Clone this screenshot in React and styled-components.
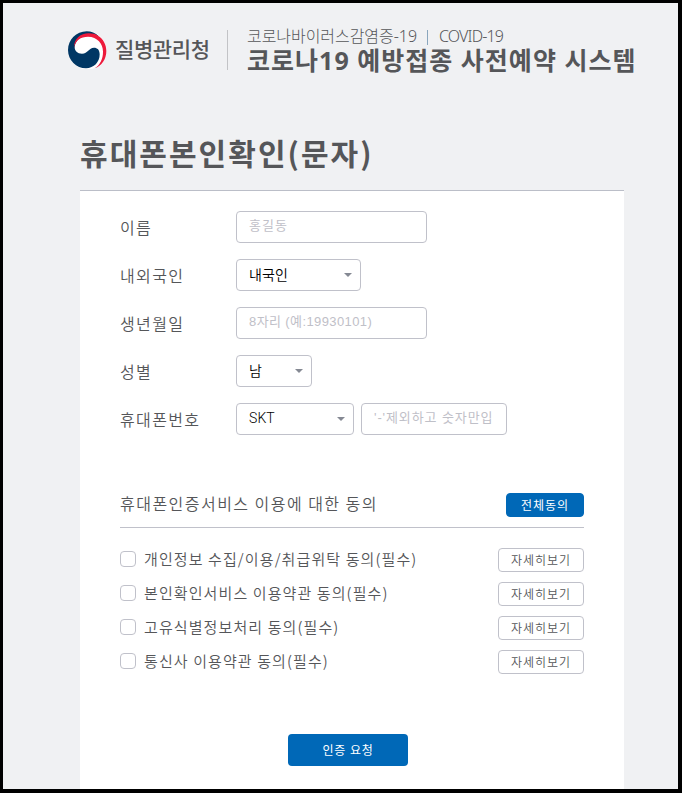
import React, { useState } from "react";
import styled, { createGlobalStyle } from "styled-components";

const GlobalStyle = createGlobalStyle`
	* {
		box-sizing: border-box;
	}
	body {
		margin: 0;
		color: #555659;
		font-family: "Noto Sans CJK KR", sans-serif;
	}
	h1, h2, p {
		margin: 0;
	}
	button, input {
		font-family: "Liberation Sans", "Noto Sans CJK KR", sans-serif;
	}
`;

const Page = styled.div`
	height: 793px;
	overflow: hidden;
	background-color: #f0f1f3;
	border: solid #000;
	border-width: 3px 4px 4px 3px;
`;

const Header = styled.header`
	display: flex;
	height: 68px;
	padding: 27px 0 0 65px;
`;

const Logo = styled.div`
	display: flex;
	align-items: center;
	width: 160px;
	height: 40px;
	border-right: 1px solid #c2c3c6;
	svg {
		flex: none;
	}
`;

const LogoName = styled.span`
	height: 40px;
	margin-left: 8px;
	font-size: 21px;
	font-weight: 500;
	line-height: 37px;
	letter-spacing: -0.4px;
	white-space: nowrap;
`;

const SiteName = styled.div`
	margin-left: 19px;
	white-space: nowrap;
`;

const SiteSub = styled.p`
	display: flex;
	height: 15px;
	font-family: "Noto Sans", "Noto Sans CJK KR", sans-serif;
	font-size: 16px;
	font-weight: 300;
	line-height: 13px;
	letter-spacing: -0.05px;
`;

const SubDivider = styled.span`
	width: 1px;
	height: 15px;
	margin: 0 11px 0 10px;
	background-color: #8aa6bd;
`;

const SubEnglish = styled.span`
	letter-spacing: -0.85px;
`;

const SiteTitle = styled.h2`
	font-family: "Noto Sans", "Noto Sans CJK KR", sans-serif;
	font-size: 25px;
	font-weight: 700;
	line-height: 30px;
	letter-spacing: 1.02px;
`;

const PageTitle = styled.h1`
	height: 119px;
	padding: 59px 0 0 77px;
	font-size: 30px;
	font-weight: 700;
	line-height: 44px;
	letter-spacing: 2.05px;
`;

const Panel = styled.main`
	width: 544px;
	height: 603px;
	margin-left: 77px;
	padding: 20px 40px 0;
	background-color: #fff;
	border-top: 1px solid #bbbec8;
`;

const Form = styled.div`
	display: flex;
	flex-direction: column;
	gap: 16px;
`;

const Row = styled.div`
	display: flex;
	align-items: center;
	height: 32px;
`;

const Label = styled.label`
	width: 116px;
	font-size: 16px;
	font-weight: 350;
	line-height: 32px;
	letter-spacing: 1.35px;
	white-space: nowrap;
`;

const TextInput = styled.input`
	width: ${(props) => props.$width}px;
	height: 32px;
	padding: 0 12px 3px;
	border: 1px solid #c0c1ca;
	border-radius: 4px;
	outline: none;
	font-size: 13px;
	letter-spacing: ${(props) => props.$spacing || 1.1}px;
	&::placeholder {
		color: #bfc0c8;
	}
`;

const Select = styled.button`
	display: flex;
	align-items: center;
	justify-content: space-between;
	width: ${(props) => props.$width}px;
	height: 32px;
	margin-right: 7px;
	padding: 0 8px 1px 12px;
	background-color: #fff;
	border: 1px solid #c0c1ca;
	border-radius: 4px;
	color: #000;
	font-family: Roboto, "Noto Sans CJK KR", sans-serif;
	font-size: 14px;
	letter-spacing: 0.1px;
	&::after {
		content: "";
		border: solid transparent;
		border-width: 4px 4px 0;
		border-top-color: #858993;
	}
`;

const SelectValue = styled.span`
	padding-bottom: 1px;
	font-weight: 350;
`;

const AgreeHead = styled.div`
	display: flex;
	align-items: center;
	justify-content: space-between;
	height: 46px;
	margin-top: 47px;
	border-bottom: 1px solid #c0c1ca;
`;

const AgreeTitle = styled.span`
	padding-bottom: 4px;
	font-size: 16px;
	font-weight: 350;
	letter-spacing: 1.47px;
`;

const AgreeList = styled.div`
	display: flex;
	flex-direction: column;
	gap: 10px;
	margin-top: 20px;
`;

const AgreeRow = styled.div`
	display: flex;
	align-items: center;
	height: 24px;
`;

const CheckBox = styled.input`
	appearance: none;
	width: 16px;
	height: 16px;
	margin: 0 8px 2px 0;
	background-color: #fff;
	border: 1px solid #c0c1ca;
	border-radius: 4px;
	&:checked {
		background-color: #0068b7;
	}
`;

const AgreeText = styled.span`
	flex: 1;
	padding-bottom: 2px;
	font-size: 15px;
	font-weight: 350;
	line-height: 22px;
	letter-spacing: 1.1px;
	white-space: nowrap;
`;

const SmallButton = styled.button`
	width: ${(props) => (props.$primary ? 78 : 86)}px;
	height: 24px;
	padding: 2px 0 0;
	background-color: ${(props) => (props.$primary ? "#0068b7" : "#fff")};
	border: 1px solid ${(props) => (props.$primary ? "#0068b7" : "#c0c1ca")};
	border-radius: 4px;
	color: ${(props) => (props.$primary ? "#fff" : "#555659")};
	font-size: 12px;
	font-weight: ${(props) => (props.$primary ? 400 : 350)};
	line-height: 20px;
	letter-spacing: 1px;
`;

const SubmitButton = styled.button`
	display: block;
	width: 120px;
	height: 32px;
	margin: 60px 0 0 168px;
	padding: 0 0 1px;
	background-color: #0068b7;
	border: none;
	border-radius: 4px;
	color: #fff;
	font-size: 12px;
	letter-spacing: 0.7px;
`;

const agreements = [
	"개인정보 수집/이용/취급위탁 동의(필수)",
	"본인확인서비스 이용약관 동의(필수)",
	"고유식별정보처리 동의(필수)",
	"통신사 이용약관 동의(필수)",
];

function Emblem() {
	return (
		<svg width="39" height="38" viewBox="0 0 117 114">
			<circle cx="58" cy="58" r="57" fill="#fff" />
			{/* blue half with the lower lobe */}
			<path d="M92 16C82 6 70 1 56 1C25 1 0 26 0 57C0 88 25 112 54 112C78 111 95 94 95 70C95 56 88 50 78 50C62 50 60 68 42 68C28 68 20 60 20 48C22 28 38 14 60 12Z" fill="#003764" />
			{/* red crescent */}
			<path d="M18 50C18 22 38 7 62 7C74 7 83 9 90 14C106 24 115 40 115 60C115 84 101 105 80 112C96 102 105 84 105 62C105 38 88 17 60 17C38 17 22 28 18 50Z" fill="#ed1a3b" />
		</svg>
	);
}

function App() {
	const [checked, setChecked] = useState([]);

	const toggle = (index) => {
		setChecked(checked.includes(index) ? checked.filter((i) => i !== index) : [...checked, index]);
	};

	return (
		<>
			<GlobalStyle />
			<Page>
				<Header>
					<Logo>
						<Emblem />
						<LogoName>질병관리청</LogoName>
					</Logo>
					<SiteName>
						<SiteSub>
							<span>코로나바이러스감염증-19</span>
							<SubDivider />
							<SubEnglish>COVID-19</SubEnglish>
						</SiteSub>
						<SiteTitle>코로나19 예방접종 사전예약 시스템</SiteTitle>
					</SiteName>
				</Header>
				<PageTitle>휴대폰본인확인(문자)</PageTitle>
				<Panel>
					<Form>
						<Row>
							<Label>이름</Label>
							<TextInput $width={191} placeholder="홍길동" />
						</Row>
						<Row>
							<Label>내외국인</Label>
							<Select $width={125}>
								<SelectValue>내국인</SelectValue>
							</Select>
						</Row>
						<Row>
							<Label>생년월일</Label>
							<TextInput $width={191} $spacing={0.4} placeholder="8자리 (예:19930101)" />
						</Row>
						<Row>
							<Label>성별</Label>
							<Select $width={76}>
								<SelectValue>남</SelectValue>
							</Select>
						</Row>
						<Row>
							<Label>휴대폰번호</Label>
							<Select $width={118}>
								<SelectValue>SKT</SelectValue>
							</Select>
							<TextInput $width={146} $spacing={0.9} placeholder="'-'제외하고 숫자만입" />
						</Row>
					</Form>
					<AgreeHead>
						<AgreeTitle>휴대폰인증서비스 이용에 대한 동의</AgreeTitle>
						<SmallButton $primary onClick={() => setChecked(agreements.map((_, i) => i))}>
							전체동의
						</SmallButton>
					</AgreeHead>
					<AgreeList>
						{agreements.map((text, index) => (
							<AgreeRow key={index}>
								<CheckBox type="checkbox" checked={checked.includes(index)} onChange={() => toggle(index)} />
								<AgreeText>{text}</AgreeText>
								<SmallButton>자세히보기</SmallButton>
							</AgreeRow>
						))}
					</AgreeList>
					<SubmitButton>인증 요청</SubmitButton>
				</Panel>
			</Page>
		</>
	);
}

export default App;
